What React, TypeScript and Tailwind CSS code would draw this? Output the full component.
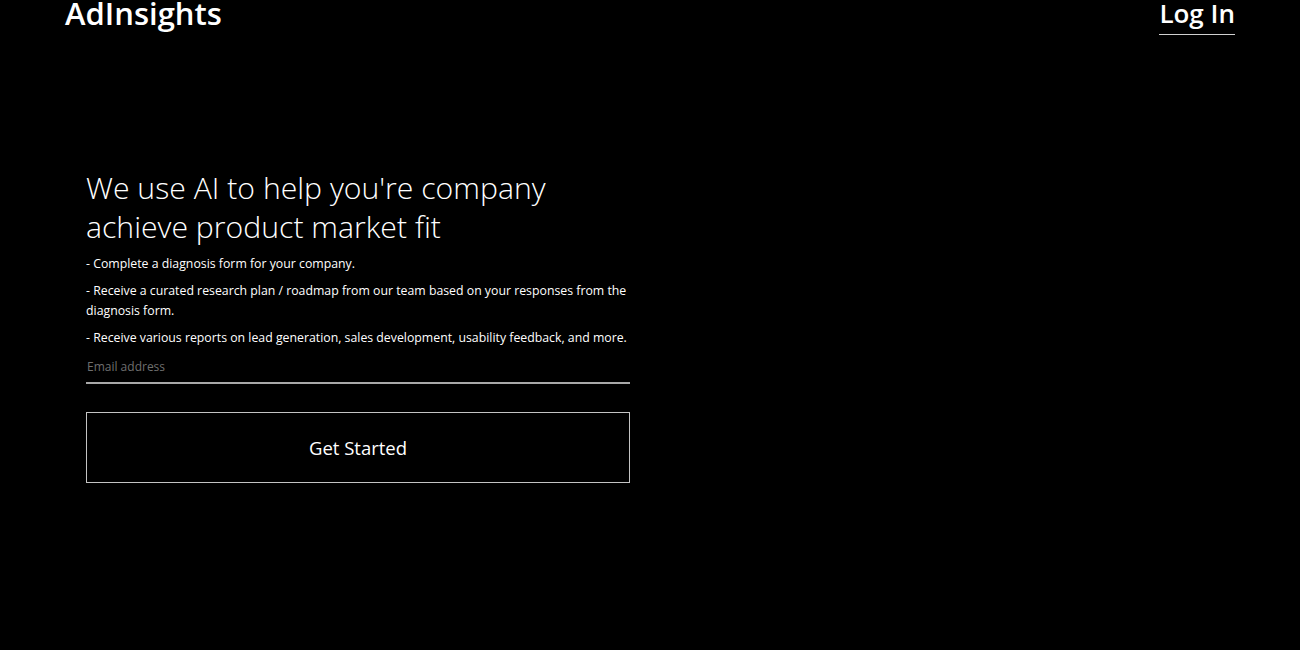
import React from "react";

const bullets = [
  "- Complete a diagnosis form for your company.",
  "- Receive a curated research plan / roadmap from our team based on your responses from the diagnosis form.",
  "- Receive various reports on lead generation, sales development, usability feedback, and more.",
];

export default function App() {
  return (
    <div className="min-h-[650px] w-full bg-black text-white font-['Open_Sans',sans-serif]">
      <header className="flex items-start justify-between px-[65px]">
        <a href="#" className="text-[31px] font-semibold leading-[27px] text-white">
          AdInsights
        </a>
        <a
          href="#"
          className="border-b border-[#d0d0d0] pb-[8px] text-[26px] font-semibold leading-[26px] text-white"
        >
          Log In
        </a>
      </header>

      <main className="pl-[86px] pt-[133px]">
        <div className="w-[544px]">
          <h1 className="text-[30.2px] font-light leading-[39px] text-white">
            We use AI to help you're company achieve product market fit
          </h1>
          <ul className="mt-[8px] flex flex-col gap-[7px] text-[12.3px] leading-[20px] text-white">
            {bullets.map((b) => (
              <li key={b}>{b}</li>
            ))}
          </ul>
          <input
            type="email"
            placeholder="Email address"
            className="mt-[9px] block h-[27px] w-full border-b-2 border-[#a8a8a8] bg-transparent pb-[6px] pl-[1px] text-[12px] text-white outline-none placeholder:text-[#6f6f6f]"
          />
          <button className="mt-[28px] flex h-[71px] w-full items-center justify-center border border-[#c4c4c4] text-[18.5px] text-white">
            Get Started
          </button>
        </div>
      </main>
    </div>
  );
}
